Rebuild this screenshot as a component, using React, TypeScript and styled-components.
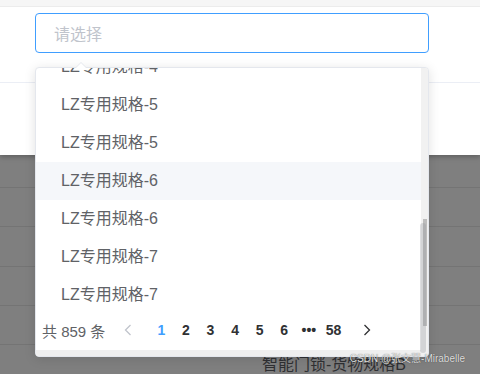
import React from 'react';
import styled, { createGlobalStyle } from 'styled-components';

const GlobalStyle = createGlobalStyle`
  html, body {
    margin: 0;
    padding: 0;
    background: #7f7f7f;
  }
  body {
    font-family: 'Liberation Sans', Arial, 'Noto Sans CJK SC', sans-serif;
  }
`;

const Page = styled.div`
  position: relative;
  width: 480px;
  height: 374px;
  overflow: hidden;
  background: #7f7f7f;
`;

// the white dialog behind the dropdown
const DialogPanel = styled.div`
  position: relative;
  z-index: 1;
  height: 155px;
  background: #ffffff;
  box-shadow: 0 2px 5px rgba(0, 0, 0, 0.25);
`;

const TopStrip = styled.div`
  height: 6px;
  background: #f6f6f6;
  border-bottom: 1px solid #ececec;
`;

const FormRow = styled.div`
  height: 69px;
  padding: 6px 51px 0 35px;
  border-bottom: 1px solid #ebeef5;
`;

const SelectInput = styled.div`
  box-sizing: border-box;
  height: 40px;
  border: 1px solid #409eff;
  border-radius: 4px;
  padding-left: 18px;
  display: flex;
  align-items: center;
  font-size: 16px;
  color: #c0c4cc;
`;

// table behind the modal mask
const MaskedTable = styled.div`
  display: flex;
  flex-direction: column;
`;

const TableRow = styled.div<{ $h: number }>`
  box-sizing: border-box;
  height: ${(p) => p.$h}px;
  border-bottom: 1px solid #747474;
`;

const CellText = styled.div`
  padding: 10px 0 0 262px;
  font-size: 16px;
  line-height: 20px;
  color: #2f3033;
  white-space: nowrap;
`;

const Watermark = styled.div`
  position: absolute;
  z-index: 3;
  right: 15px;
  top: 352px;
  font-size: 10px;
  line-height: 14px;
  color: rgba(240, 240, 240, 0.9);
  text-shadow: 0 0 1px rgba(0, 0, 0, 0.6);
`;

const Dropdown = styled.div`
  position: absolute;
  z-index: 2;
  left: 35px;
  top: 67px;
  box-sizing: border-box;
  width: 394px;
  height: 290px;
  background: #ffffff;
  border: 1px solid #e4e7ed;
  border-radius: 4px;
  box-shadow: 0 2px 12px rgba(0, 0, 0, 0.12);
  display: grid;
  grid-template-columns: 1fr 7px;
  grid-template-rows: 1fr 6px;
`;

const Arrow = styled.div`
  position: absolute;
  top: -6px;
  left: 39px;
  width: 0;
  height: 0;
  border-left: 6px solid transparent;
  border-right: 6px solid transparent;
  border-bottom: 6px solid #e4e7ed;
  &::after {
    content: '';
    position: absolute;
    left: -5px;
    top: 1px;
    border-left: 5px solid transparent;
    border-right: 5px solid transparent;
    border-bottom: 5px solid #ffffff;
  }
`;

const ScrollArea = styled.div`
  display: flex;
  flex-direction: column;
  overflow: hidden;
  border-top-left-radius: 4px;
`;

const ListViewport = styled.div`
  height: 246px;
  overflow: hidden;
  flex: 0 0 auto;
`;

const OptionList = styled.ul`
  list-style: none;
  margin: -20px 0 0;
  padding: 0;
`;

const OptionItem = styled.li<{ $hover?: boolean }>`
  height: 38px;
  line-height: 38px;
  padding-left: 25px;
  font-size: 16px;
  color: #606266;
  background: ${(p) => (p.$hover ? '#f5f7fa' : 'transparent')};
  white-space: nowrap;
`;

const Pagination = styled.div`
  height: 32px;
  display: flex;
  align-items: center;
  padding-left: 6px;
  font-size: 15px;
  color: #606266;
`;

const Total = styled.span`
  width: 74px;
  white-space: nowrap;
`;

const NavButton = styled.span<{ $disabled?: boolean }>`
  width: 24px;
  height: 28px;
  display: flex;
  align-items: center;
  justify-content: center;
  color: ${(p) => (p.$disabled ? '#c0c4cc' : '#303133')};
`;

const Pager = styled.ul`
  list-style: none;
  margin: 0 9px;
  padding: 0;
  display: flex;
`;

const PagerItem = styled.li<{ $active?: boolean }>`
  width: 24.6px;
  height: 28px;
  line-height: 28px;
  text-align: center;
  font-size: 14px;
  font-weight: 700;
  color: ${(p) => (p.$active ? '#409eff' : '#303133')};
`;

const VTrack = styled.div`
  grid-row: 1 / 3;
  grid-column: 2;
  background: #f1f1f1;
  border-top-right-radius: 3px;
  border-bottom-right-radius: 3px;
`;

const VThumb = styled.div`
  margin-top: 151px;
  margin-left: 2px;
  width: 4px;
  height: 107px;
  background: #bdbdbd;
`;

const HTrack = styled.div`
  background: #efefef;
  border-bottom-left-radius: 3px;
`;

const ElThumb = styled.div`
  position: absolute;
  right: 2px;
  top: 155px;
  width: 6px;
  height: 130px;
  border-radius: 3px;
  background: rgba(144, 147, 153, 0.3);
`;

const Chevron: React.FC<{ dir: 'left' | 'right' }> = ({ dir }) => (
  <svg width="8" height="12" viewBox="0 0 8 12">
    <polyline
      points={dir === 'left' ? '6.5,1 1.5,6 6.5,11' : '1.5,1 6.5,6 1.5,11'}
      fill="none"
      stroke="currentColor"
      strokeWidth="1.3"
    />
  </svg>
);

const options = [
  'LZ专用规格-4',
  'LZ专用规格-5',
  'LZ专用规格-5',
  'LZ专用规格-6',
  'LZ专用规格-6',
  'LZ专用规格-7',
  'LZ专用规格-7',
];

const pages = ['1', '2', '3', '4', '5', '6', '•••', '58'];

const App: React.FC = () => {
  return (
    <Page>
      <GlobalStyle />
      <DialogPanel>
        <TopStrip />
        <FormRow>
          <SelectInput>请选择</SelectInput>
        </FormRow>
      </DialogPanel>

      <MaskedTable>
        <TableRow $h={33} />
        <TableRow $h={39} />
        <TableRow $h={40} />
        <TableRow $h={39} />
        <TableRow $h={39} />
        <TableRow $h={39}>
          <CellText>智能门锁-货物规格B</CellText>
        </TableRow>
      </MaskedTable>

      <Dropdown>
        <Arrow />
        <ScrollArea>
          <ListViewport>
            <OptionList>
              {options.map((o, i) => (
                <OptionItem key={i} $hover={i === 3}>
                  {o}
                </OptionItem>
              ))}
            </OptionList>
          </ListViewport>
          <Pagination>
            <Total>共 859 条</Total>
            <NavButton $disabled>
              <Chevron dir="left" />
            </NavButton>
            <Pager>
              {pages.map((p, i) => (
                <PagerItem key={i} $active={i === 0}>
                  {p}
                </PagerItem>
              ))}
            </Pager>
            <NavButton>
              <Chevron dir="right" />
            </NavButton>
          </Pagination>
        </ScrollArea>
        <VTrack>
          <VThumb />
        </VTrack>
        <HTrack />
        <ElThumb />
      </Dropdown>

      <Watermark>CSDN @张文慧-Mirabelle</Watermark>
    </Page>
  );
};

export default App;
